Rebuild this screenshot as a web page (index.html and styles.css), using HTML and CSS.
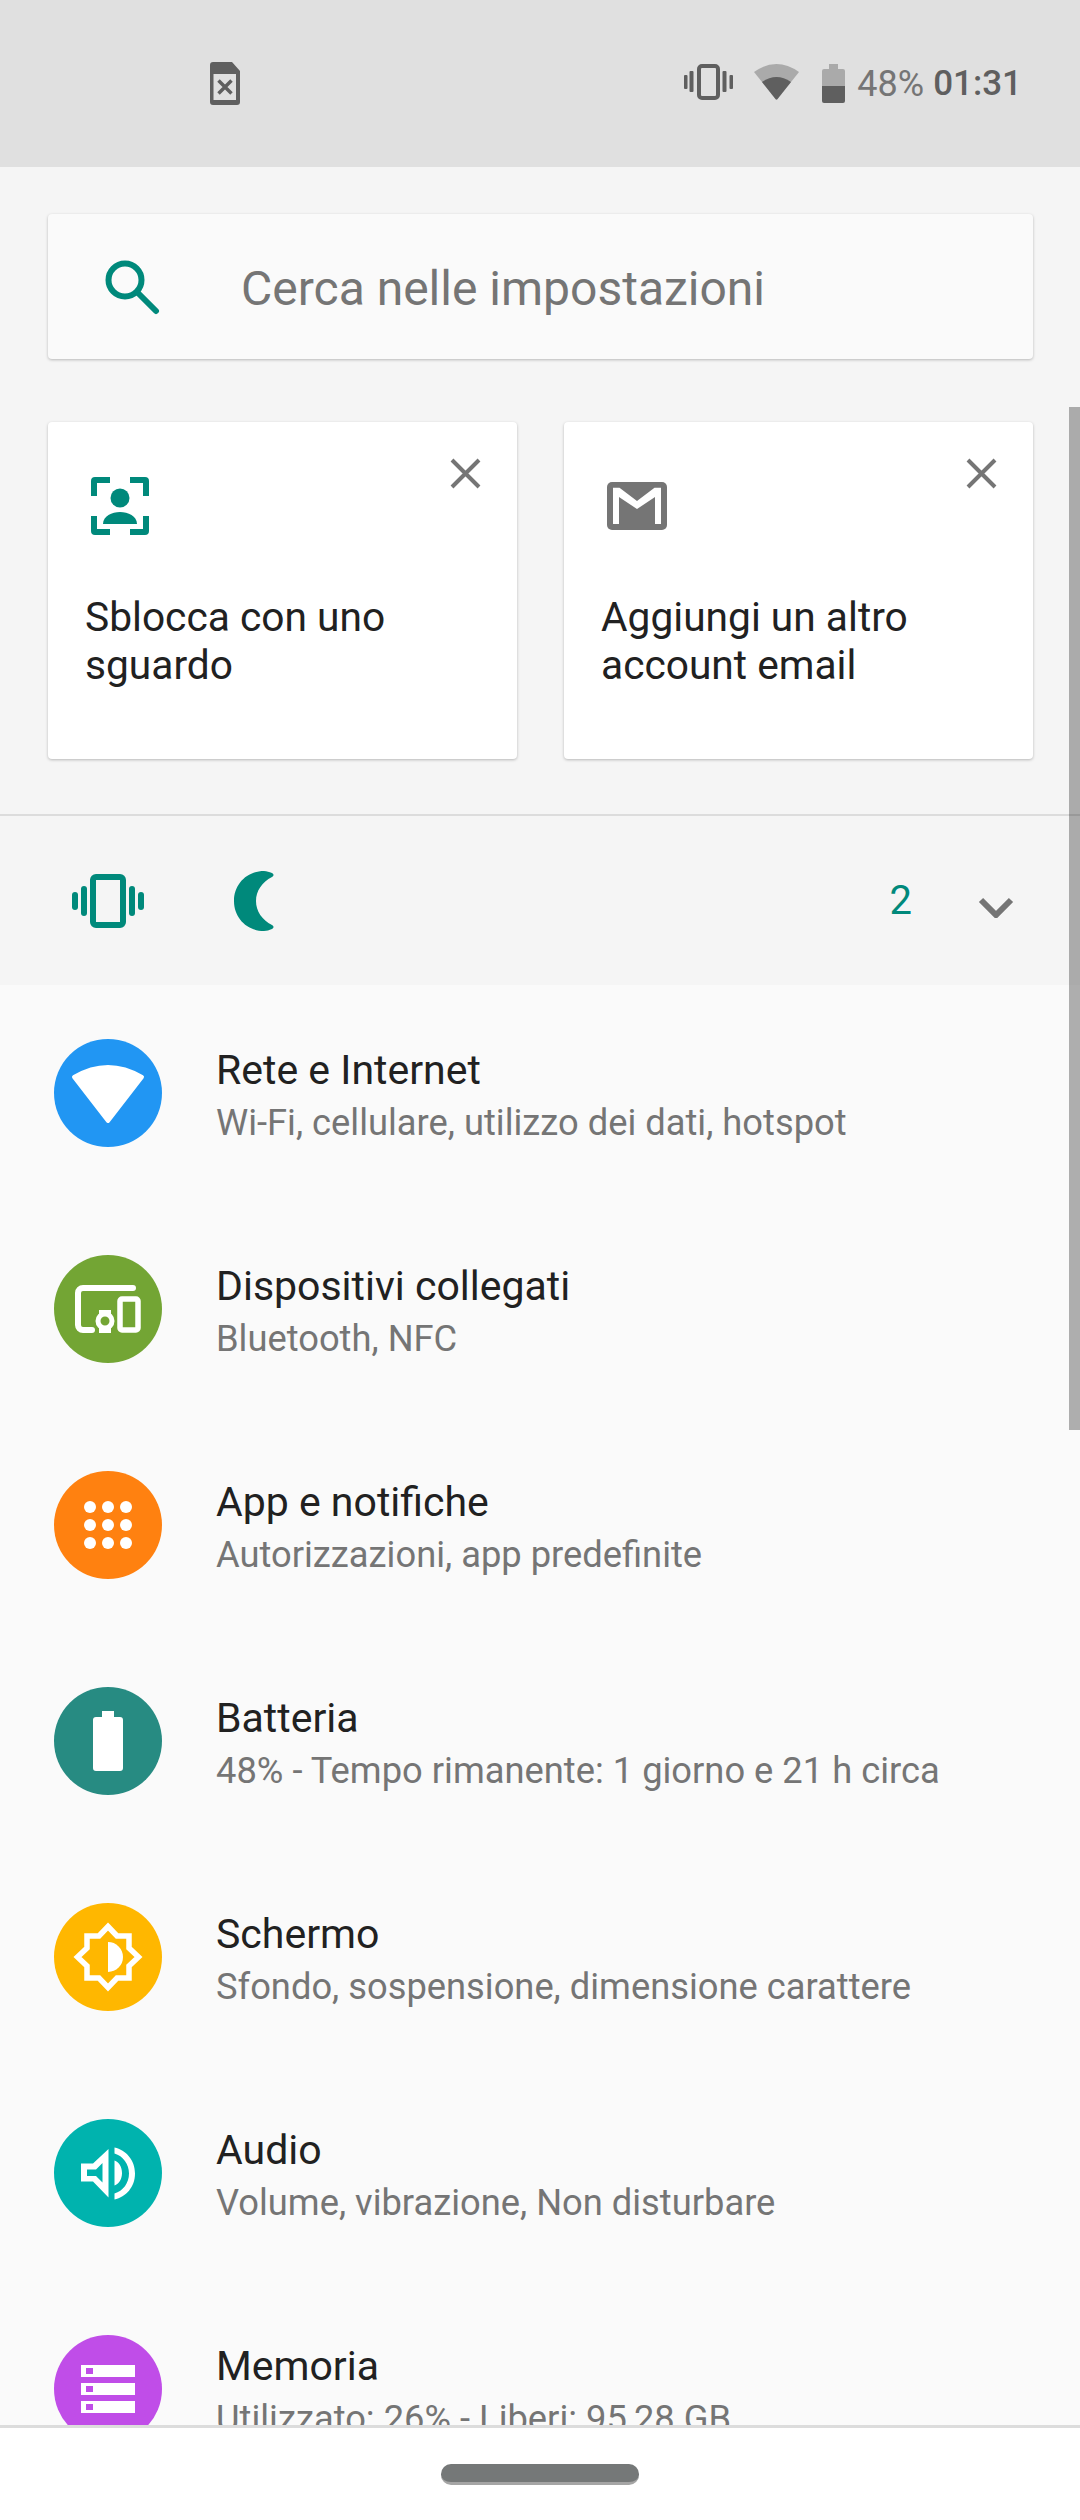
FILE: index.html
```html
<!DOCTYPE html>
<html lang="it">
<head>
    <meta charset="UTF-8">
    <meta name="viewport" content="width=device-width, initial-scale=1.0">
    <title>Impostazioni</title>
    <link rel="stylesheet" href="styles.css">
</head>
<body>

    <div class="status-bar">
        <svg class="sim-icon" width="30" height="43" viewBox="0 0 30 43">
            <path class="ic-dark" fill-rule="evenodd" d="M3 0h19l8 9v31a3 3 0 0 1-3 3H3a3 3 0 0 1-3-3V3a3 3 0 0 1 3-3zM3.500 12v26h22.500V12z"/>
            <path class="line-dark" d="M8.500 18.500l13 13M21.500 18.500l-13 13"/>
        </svg>
        <div class="status-right">
            <svg class="st-vibrate" width="49" height="36" viewBox="0 0 49 36">
                <rect x="15" y="2" width="19" height="32" rx="3" fill="none" stroke="#5f5f5f" stroke-width="4"/>
                <rect class="ic-dark" x="0" y="11" width="3.500" height="14" rx="1"/>
                <rect class="ic-dark" x="5.500" y="7" width="4" height="21" rx="1"/>
                <rect class="ic-dark" x="38.500" y="7" width="4" height="21" rx="1"/>
                <rect class="ic-dark" x="45.500" y="11" width="3.500" height="14" rx="1"/>
            </svg>
            <svg class="st-wifi" width="45" height="36" viewBox="0 0 45 36">
                <path fill="#aaaaaa" d="M0 8Q22.500-8 45 8L23.500 35Q22.500 36 21.500 35Z"/>
                <path fill="#5f5f5f" d="M8 18Q22.500 8 37 18L23.500 35Q22.500 36 21.500 35Z"/>
            </svg>
            <svg class="st-battery" width="23" height="39" viewBox="0 0 23 39">
                <path fill="#aaaaaa" d="M7 0h9v5h5a2 2 0 0 1 2 2v16H0V7a2 2 0 0 1 2-2h5z"/>
                <path fill="#5f5f5f" d="M0 22h23v15a2 2 0 0 1-2 2H2a2 2 0 0 1-2-2z"/>
            </svg>
            <span class="st-percent">48%</span>
            <span class="st-time">01:31</span>
        </div>
    </div>

    <div class="top-area">
        <div class="search-card">
            <svg class="search-icon" width="56" height="56" viewBox="0 0 56 56">
                <circle cx="21" cy="21" r="16.500" fill="none" stroke="#00897b" stroke-width="6"/>
                <path d="M33 33l19 19" fill="none" stroke="#00897b" stroke-width="6" stroke-linecap="round"/>
            </svg>
            <span class="search-text">Cerca nelle impostazioni</span>
        </div>

        <div class="suggestions">
            <div class="sug-card">
                <svg class="sug-close" width="31" height="31" viewBox="0 0 31 31"><path d="M2 2l27 27M29 2L2 29"/></svg>
                <svg class="sug-icon" width="58" height="58" viewBox="0 0 58 58">
                    <path class="teal-fill" d="M4 0h15v6H6v13H0V4a4 4 0 0 1 4-4zM39 0h15a4 4 0 0 1 4 4v15h-6V6H39zM0 39h6v13h13v6H4a4 4 0 0 1-4-4zM52 39h6v15a4 4 0 0 1-4 4H39v-6h13z"/>
                    <circle class="teal-fill" cx="29" cy="21" r="9.500"/>
                    <path class="teal-fill" d="M12 47c0-8 9-12 17-12s17 4 17 12z"/>
                </svg>
                <div class="sug-text">Sblocca con uno sguardo</div>
            </div>
            <div class="sug-card">
                <svg class="sug-close" width="31" height="31" viewBox="0 0 31 31"><path d="M2 2l27 27M29 2L2 29"/></svg>
                <svg class="sug-icon" width="60" height="48" viewBox="0 0 60 48">
                    <rect width="60" height="48" rx="5" fill="#757575"/>
                    <path fill="#ffffff" d="M6 5.700h6.500L30 19 47.500 5.700H54V42h-6V15L30 27 12 15v27H6z"/>
                </svg>
                <div class="sug-text">Aggiungi un altro account email</div>
            </div>
        </div>
    </div>

    <div class="cond-bar">
        <svg class="cond-vibrate" width="72" height="54" viewBox="0 0 72 54">
            <rect class="teal-fill" x="0" y="18" width="6" height="18" rx="3"/>
            <rect class="teal-fill" x="9" y="12" width="6" height="30" rx="3"/>
            <rect x="21" y="3" width="30" height="48" rx="3" fill="none" stroke="#00897b" stroke-width="6"/>
            <rect class="teal-fill" x="57" y="12" width="6" height="30" rx="3"/>
            <rect class="teal-fill" x="66" y="18" width="6" height="18" rx="3"/>
        </svg>
        <svg class="cond-moon" width="40" height="60" viewBox="0 0 40 60">
            <path class="teal-fill" d="M30 0c3 0 5 1 8 2 2 1 2 3 0 4C28 11 22 20 22 30s6 19 16 24c2 1 2 3 0 4-3 1-5 2-8 2C13 60 0 47 0 30S13 0 30 0z"/>
        </svg>
        <span class="cond-count">2</span>
        <svg class="cond-arrow" width="36" height="21" viewBox="0 0 36 21"><path d="M3 3l15 15L33 3"/></svg>
    </div>

    <div class="settings-list">
        <div class="row">
            <svg class="row-icon" viewBox="0 0 108 108">
                <circle cx="54" cy="54" r="54" fill="#2196f3"/>
                <path fill="#fff" stroke="#fff" stroke-width="4" stroke-linejoin="round" d="M20 38Q54 18 88 38L54 82Z"/>
            </svg>
            <div class="row-text"><div class="row-title">Rete e Internet</div><div class="row-sub">Wi-Fi, cellulare, utilizzo dei dati, hotspot</div></div>
        </div>
        <div class="row">
            <svg class="row-icon" viewBox="0 0 108 108">
                <circle cx="54" cy="54" r="54" fill="#73a534"/>
                <path fill="none" stroke="#fff" stroke-width="6" stroke-linecap="round" d="M79 33H29a5 5 0 0 0-5 5v32a5 5 0 0 0 5 5h9"/>
                <rect x="66" y="44" width="18" height="31" rx="2" fill="none" stroke="#fff" stroke-width="5.500"/>
                <circle cx="51" cy="66" r="7" fill="none" stroke="#fff" stroke-width="5"/>
                <path fill="#fff" d="M45 55h12v4H45zM45 73h12v5H45z"/>
            </svg>
            <div class="row-text"><div class="row-title">Dispositivi collegati</div><div class="row-sub">Bluetooth, NFC</div></div>
        </div>
        <div class="row">
            <svg class="row-icon" viewBox="0 0 108 108">
                <circle cx="54" cy="54" r="54" fill="#ff8110"/>
                <g fill="#fff">
                    <circle cx="36" cy="36" r="6"/><circle cx="54" cy="36" r="6"/><circle cx="72" cy="36" r="6"/>
                    <circle cx="36" cy="54" r="6"/><circle cx="54" cy="54" r="6"/><circle cx="72" cy="54" r="6"/>
                    <circle cx="36" cy="72" r="6"/><circle cx="54" cy="72" r="6"/><circle cx="72" cy="72" r="6"/>
                </g>
            </svg>
            <div class="row-text"><div class="row-title">App e notifiche</div><div class="row-sub">Autorizzazioni, app predefinite</div></div>
        </div>
        <div class="row">
            <svg class="row-icon" viewBox="0 0 108 108">
                <circle cx="54" cy="54" r="54" fill="#278b82"/>
                <path fill="#fff" d="M48 24h12v6h6a3 3 0 0 1 3 3v48a3 3 0 0 1-3 3H42a3 3 0 0 1-3-3V33a3 3 0 0 1 3-3h6z"/>
            </svg>
            <div class="row-text"><div class="row-title">Batteria</div><div class="row-sub">48% - Tempo rimanente: 1 giorno e 21 h circa</div></div>
        </div>
        <div class="row">
            <svg class="row-icon" viewBox="0 0 108 108">
                <circle cx="54" cy="54" r="54" fill="#ffb700"/>
                <path fill="none" stroke="#fff" stroke-width="5.500" d="M54 23.500L63 33H75V45L84.500 54 75 63V75H63L54 84.500 45 75H33V63L23.500 54 33 45V33H45Z"/>
                <path fill="#fff" d="M54 39a15 15 0 0 1 0 30z"/>
            </svg>
            <div class="row-text"><div class="row-title">Schermo</div><div class="row-sub">Sfondo, sospensione, dimensione carattere</div></div>
        </div>
        <div class="row">
            <svg class="row-icon" viewBox="0 0 108 108">
                <circle cx="54" cy="54" r="54" fill="#00b3ae"/>
                <path fill="#fff" fill-rule="evenodd" d="M27 44.500H39L54.500 30V78.500L39 62.500H27ZM33 50.500V57H42L48.500 63.500V44L42 50.500Z"/>
                <path fill="#fff" d="M60.500 28.500C72 31 81 41 81 54.500S72 78 60.500 80.500V74.500C69 72 75 64 75 54.500S69 37 60.500 34.500ZM60.500 41.500C65 43 68 48 68 54S65 65 60.500 66.500Z"/>
            </svg>
            <div class="row-text"><div class="row-title">Audio</div><div class="row-sub">Volume, vibrazione, Non disturbare</div></div>
        </div>
        <div class="row">
            <svg class="row-icon" viewBox="0 0 108 108">
                <circle cx="54" cy="54" r="54" fill="#c04de8"/>
                <path fill="#fff" fill-rule="evenodd" d="M27 30h54v12H27zM32 33v6h7v-6zM27 48h54v12H27zM32 51v6h7v-6zM27 66h54v12H27zM32 69v6h7v-6z"/>
            </svg>
            <div class="row-text"><div class="row-title">Memoria</div><div class="row-sub">Utilizzato: 26% - Liberi: 95,28 GB</div></div>
        </div>
    </div>

    <div class="nav-bar"><div class="nav-pill"></div></div>

    <div class="scroll-thumb"></div>

</body>
</html>
```

FILE: styles.css
```css
* {
    box-sizing: border-box;
}
body {
    font-family: Roboto, "Noto Sans", sans-serif;
    margin: 0;
    padding: 0;
    width: 1080px;
    height: 2520px;
    overflow: hidden;
    position: relative;
    display: flex;
    flex-direction: column;
    background-color: #f5f5f5;
}
svg {
    display: block;
    flex: none;
}
.ic-dark {
    fill: #5f5f5f;
}
.line-dark {
    fill: none;
    stroke: #5f5f5f;
    stroke-width: 3.500;
}
.teal-fill {
    fill: #00897b;
}

/* status bar */
.status-bar {
    height: 167px;
    flex: none;
    background: #e0e0e0;
    display: flex;
    align-items: flex-start;
    justify-content: space-between;
    padding: 62px 58px 0 210px;
}
.status-right {
    display: flex;
    align-items: flex-start;
    margin-top: 2px;
}
.st-wifi {
    margin-left: 21px;
}
.st-battery {
    margin-left: 23px;
}
.st-percent, .st-time {
    font-size: 36px;
    line-height: 40px;
    color: #757575;
}
.st-percent {
    margin-left: 12px;
}
.st-time {
    margin-left: 9px;
    font-size: 35px;
    font-weight: 500;
    color: #5f5f5f;
}

/* search + suggestions */
.top-area {
    height: 649px;
    flex: none;
    padding: 47px 47px 0 48px;
    border-bottom: 2px solid #dcdcdc;
}
.search-card {
    height: 145px;
    background: #fafafa;
    border-radius: 4px;
    box-shadow: 0 1px 3px rgba(0,0,0,0.25);
    display: flex;
    align-items: center;
    padding-left: 56px;
}
.search-text {
    margin-left: 81px;
    padding-top: 4px;
    font-size: 48px;
    color: #757575;
}
.suggestions {
    display: flex;
    gap: 47px;
    margin-top: 63px;
}
.sug-card {
    width: 469px;
    height: 337px;
    position: relative;
    background: #fff;
    border-radius: 4px;
    box-shadow: 0 1px 3px rgba(0,0,0,0.25);
    padding: 55px 37px 0;
}
.sug-close {
    position: absolute;
    top: 36px;
    right: 36px;
}
.sug-close path {
    fill: none;
    stroke: #757575;
    stroke-width: 4;
}
.sug-icon {
    height: 58px;
    margin-left: 6px;
}
.sug-text {
    margin-top: 58px;
    font-size: 40.700px;
    line-height: 48px;
    color: #212121;
}

/* conditions bar */
.cond-bar {
    height: 169px;
    flex: none;
    display: flex;
    align-items: center;
    padding-left: 72px;
}
.cond-moon {
    margin-left: 90px;
}
.cond-count {
    margin-left: auto;
    font-size: 40px;
    color: #00897b;
}
.cond-arrow {
    margin-left: 66px;
    margin-right: 66px;
    margin-top: 14px;
}
.cond-arrow path {
    fill: none;
    stroke: #757575;
    stroke-width: 6;
}

/* main list */
.settings-list {
    height: 1440px;
    flex: none;
    overflow: hidden;
    background: #fafafa;
}
.row {
    height: 216px;
    display: flex;
    align-items: center;
    padding-left: 54px;
}
.row-icon {
    width: 108px;
    height: 108px;
}
.row-text {
    margin-left: 54px;
    margin-top: 7px;
}
.row-title {
    font-size: 41px;
    line-height: 53px;
    color: #212121;
}
.row-sub {
    font-size: 36.300px;
    line-height: 52px;
    color: #757575;
}
.scroll-thumb {
    position: absolute;
    top: 407px;
    right: 0;
    width: 11px;
    height: 1023px;
    background: rgba(0,0,0,0.3);
}

.nav-bar {
    flex: 1;
    background: #fff;
    border-top: 3px solid #dcdcdc;
    display: flex;
    justify-content: center;
    padding-top: 36px;
}
.nav-pill {
    width: 198px;
    height: 21px;
    border-radius: 10px;
    background: #757878;
    border-bottom: 3px solid #a5a5a5;
}
```
